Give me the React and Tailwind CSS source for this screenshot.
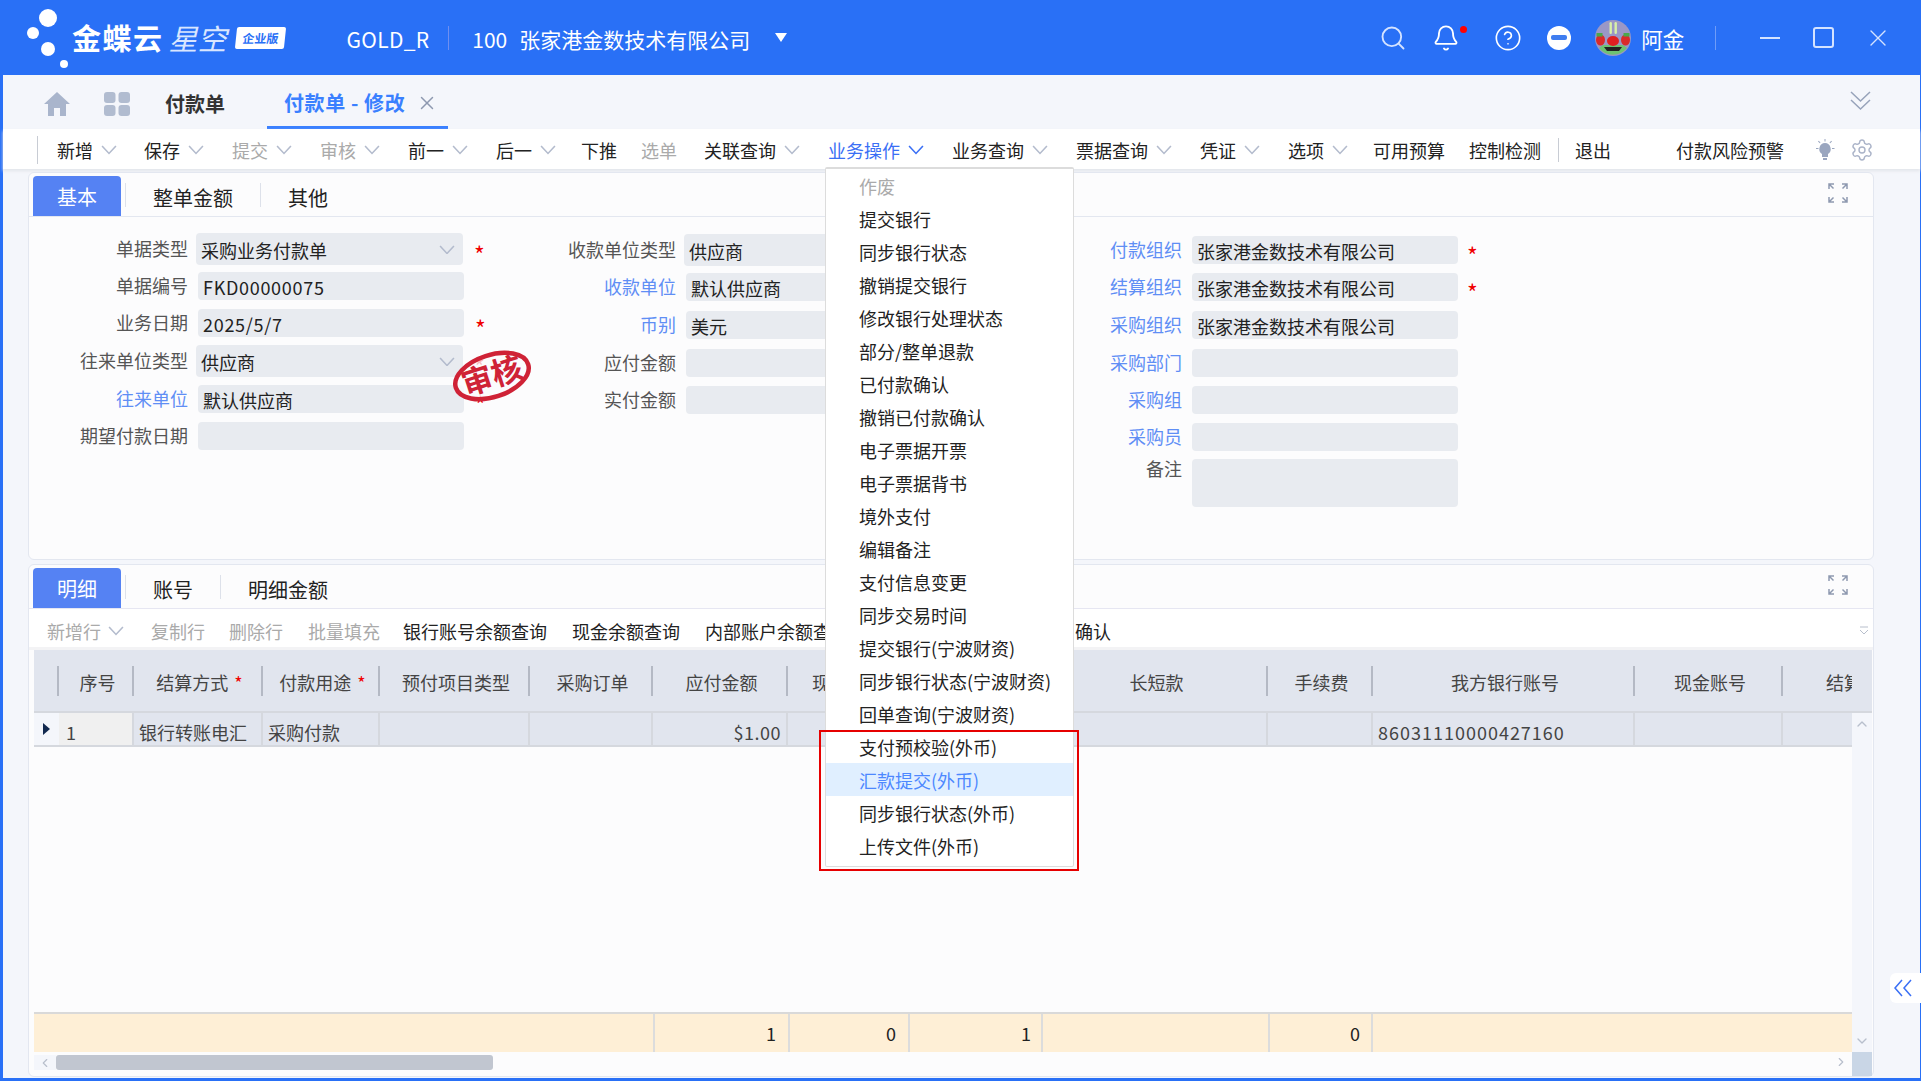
import { Search, Bell, CircleHelp, Settings, X, ChevronUp, ChevronDown, ChevronLeft, ChevronRight } from "lucide-react";

const Chevron = ({ color = "#b3bbcd", size = 16 }) => (
  <svg width={size} height={size * 0.62} viewBox="0 0 16 10" fill="none" stroke={color} strokeWidth="1.6">
    <path d="M1 1l7 7.5L15 1" />
  </svg>
);

const Expand = () => (
  <svg width="20" height="20" viewBox="0 0 20 20" fill="none" stroke="#8e99b0" strokeWidth="1.5">
    <path d="M1 6V1h5M14 1h5v5M19 14v5h-5M6 19H1v-5M1.5 1.5l4 4M18.5 1.5l-4 4M18.5 18.5l-4-4M1.5 18.5l4-4" />
  </svg>
);

const toolbar = [
  { t: "新增", c: true, mr: "mr-[27px]" },
  { t: "保存", c: true, mr: "mr-[28px]" },
  { t: "提交", c: true, off: true, mr: "mr-[28px]" },
  { t: "审核", c: true, off: true, mr: "mr-[28px]" },
  { t: "前一", c: true, mr: "mr-[28px]" },
  { t: "后一", c: true, mr: "mr-[25px]" },
  { t: "下推", mr: "mr-[24px]" },
  { t: "选单", off: true, mr: "mr-[27px]" },
  { t: "关联查询", c: true, mr: "mr-[28px]" },
  { t: "业务操作", c: true, on: true, mr: "mr-[28px]" },
  { t: "业务查询", c: true, mr: "mr-[28px]" },
  { t: "票据查询", c: true, mr: "mr-[28px]" },
  { t: "凭证", c: true, mr: "mr-[28px]" },
  { t: "选项", c: true, mr: "mr-[25px]" },
  { t: "可用预算", mr: "mr-[24px]" },
  { t: "控制检测", mr: "mr-[24px]" },
];

const menu = [
  "作废", "提交银行", "同步银行状态", "撤销提交银行", "修改银行处理状态", "部分/整单退款", "已付款确认",
  "撤销已付款确认", "电子票据开票", "电子票据背书", "境外支付", "编辑备注", "支付信息变更", "同步交易时间",
  "提交银行(宁波财资)", "同步银行状态(宁波财资)", "回单查询(宁波财资)", "支付预校验(外币)", "汇款提交(外币)",
  "同步银行状态(外币)", "上传文件(外币)",
];

const tableCols = [
  { w: "w-[25px]", t: "" },
  { w: "w-[75px]", t: "序号" },
  { w: "w-[129px]", t: "结算方式", req: true },
  { w: "w-[117px]", t: "付款用途", req: true },
  { w: "w-[150px]", t: "预付项目类型" },
  { w: "w-[123px]", t: "采购订单" },
  { w: "w-[135px]", t: "应付金额" },
  { w: "w-[122px]", t: "现" },
  { w: "w-[133px]", t: "" },
  { w: "w-[225px]", t: "长短款" },
  { w: "w-[105px]", t: "手续费" },
  { w: "w-[262px]", t: "我方银行账号" },
  { w: "w-[148px]", t: "现金账号" },
  { w: "w-[154px]", t: "结算方式" },
];

const Star = ({ far }) => (
  <span className={`${far ? "ml-[9px]" : "ml-[11px]"} -mt-[3px] h-[10px] text-[23px] leading-none text-[#f00000]`}>*</span>
);

const Field = ({ label, link, value, select, req, labelW, ctrlW, top, tall, far }) => (
  <div className={`flex ${tall ? "items-start" : "items-center"} ${top}`}>
    <div className={`${labelW} text-right ${link ? "text-[#5f8ef5]" : "text-[#555]"} ${tall ? "" : "-mt-[2px]"}`}>{label}</div>
    <div
      className={`flex items-center rounded-[4px] bg-[#e8ebf0] pl-[5px] pr-[8px] pt-[1px] text-[#222] ${
        select ? `ml-[8px] h-[32px] ${ctrlW.select}` : `ml-[10px] ${tall ? "h-[48px]" : "h-[28px]"} ${ctrlW.input}`
      }`}
    >
      <span className={`flex-1 whitespace-nowrap ${value && /^[\x00-\x7f]+$/.test(value) ? "tracking-[0.7px]" : ""}`}>{value}</span>
      {select && <Chevron />}
    </div>
    {req && <Star far={far} />}
  </div>
);

const col1Ctrl = { select: "w-[267px]", input: "w-[266px]" };
const col2Ctrl = { select: "w-[266px]", input: "w-[264px]" };

const Avatar = () => (
  <svg width="36" height="36" viewBox="0 0 36 36">
    <circle cx="18" cy="18" r="18" fill="#9a97c6" />
    <path d="M4 28a18 18 0 0 0 28 0l-4-3H8z" fill="#6ec271" />
    <path d="M9 27h18l-3 4H12z" fill="#222" />
    <rect x="14.500" y="2" width="2.400" height="12" rx="1.200" fill="#d8f0a8" />
    <rect x="19.500" y="2" width="2.400" height="12" rx="1.200" fill="#d8f0a8" />
    <ellipse cx="18" cy="21" rx="6" ry="5" fill="#e01f22" />
    <ellipse cx="5.500" cy="20" rx="4.500" ry="5.500" fill="#d92a2a" />
    <ellipse cx="30.500" cy="20" rx="4.500" ry="5.500" fill="#d92a2a" />
    <rect x="1.500" y="13" width="6" height="3.500" fill="#49a84c" />
    <rect x="28.500" y="13" width="6" height="3.500" fill="#49a84c" />
  </svg>
);

export default function App() {
  return (
    <div className="relative h-[1081px] w-[1921px] overflow-hidden bg-[#2970f6] font-['Noto_Sans_CJK_SC','Liberation_Sans',sans-serif] text-[18px] leading-none">
      <header className="flex h-[75px] items-center text-[21px] text-white">
        <svg width="50" height="75" viewBox="0 0 50 75" className="ml-[24px]" fill="#fff">
          <circle cx="24" cy="18" r="9" />
          <circle cx="9" cy="33" r="6" />
          <circle cx="24" cy="49" r="7" />
          <circle cx="40" cy="64" r="4" />
        </svg>
        <span className="-ml-[2px] text-[29px] font-bold tracking-[1.5px]">金蝶云</span>
        <span className="ml-[5px] text-[29px] italic text-[#d9e6ff]">星空</span>
        <span className="ml-[9px] flex h-[22px] w-[49px] -skew-x-6 items-center justify-center rounded-[2px] bg-white text-[12px] font-bold text-[#2970f6]">企业版</span>
        <span className="ml-[62px] pt-[3px] tracking-[0.3px]">GOLD_R</span>
        <span className="ml-[19px] h-[24px] w-px bg-[#6f8ff0]" />
        <span className="ml-[23px] pt-[3px]">100</span>
        <span className="ml-[12px] pt-[3px]">张家港金数技术有限公司</span>
        <span className="ml-[25px] h-0 w-0 border-x-[6px] border-t-[9px] border-x-transparent border-t-white" />
        <Search className="ml-[592px]" size={28} color="#d5e3ff" strokeWidth={1.6} />
        <Bell className="ml-[25px]" size={28} strokeWidth={1.6} />
        <span className="mb-[16px] h-[7px] w-[7px] rounded-full bg-[#f00]" />
        <CircleHelp className="ml-[27px]" size={28} strokeWidth={1.4} />
        <span className="ml-[25px] flex h-[24px] w-[24px] items-center justify-center rounded-full bg-white">
          <span className="h-[5px] w-[16px] rounded-[2px] bg-[#3f7df0]" />
        </span>
        <span className="ml-[24px]"><Avatar /></span>
        <span className="ml-[10px] pt-[2px] text-[21.5px]">阿金</span>
        <span className="ml-[31px] h-[24px] w-px bg-[#6f9cf8]" />
        <span className="ml-[44px] h-[2px] w-[20px] bg-[#d5e3ff]" />
        <span className="ml-[33px] h-[21px] w-[21px] rounded-[3px] border-2 border-[#d5e3ff]" />
        <X className="ml-[30px]" size={28} color="#d5e3ff" strokeWidth={1.2} />
      </header>

      <div className="ml-[3px] mr-[1px] flex h-[1003px] flex-col bg-[#f4f6fb]">
        <div className="flex h-[54px] items-center">
          <svg width="26" height="24" viewBox="0 0 26 24" className="ml-[41px] mt-[3px]" fill="#a9b5cc">
            <path d="M13 0L0 12h4v12h6v-8h6v8h6V12h4z" />
          </svg>
          <svg width="26" height="24" viewBox="0 0 26 24" className="ml-[34px] mt-[3px]" fill="#b1bcd0">
            <rect width="11.5" height="11" rx="3" />
            <rect x="14.5" width="11.5" height="11" rx="3" />
            <rect y="13" width="11.5" height="11" rx="3" />
            <rect x="14.5" y="13" width="11.5" height="11" rx="3" />
          </svg>
          <span className="ml-[35px] pt-[4px] text-[20px] font-bold text-[#333]">付款单</span>
          <div className="ml-[42px] flex h-[54px] w-[181px] items-center border-b-[3px] border-[#3a80ff] pl-[17px] pt-[5px]">
            <span className="text-[20px] font-bold tracking-[0.6px] text-[#3a80ff]">付款单 - 修改</span>
            <X className="ml-[11px]" size={22} color="#8e99b0" strokeWidth={1.6} />
          </div>
          <svg width="21" height="20" viewBox="0 0 21 20" className="ml-[1402px] -mt-[3px]" fill="none" stroke="#97a3ba" strokeWidth="1.5">
            <path d="M1 1l9.500 9L20 1M1 9l9.500 9L20 9" />
          </svg>
        </div>

        <div className="flex h-[40px] items-center bg-white pt-[2px] shadow-[0_2px_3px_#e3e5ea]">
          <span className="ml-[34px] h-[28px] w-px bg-[#c8ccd4]" />
          <div className="ml-[19px] flex items-center">
            {toolbar.map((item) => (
              <div key={item.t} className={`flex items-center ${item.mr}`}>
                <span className={item.on ? "text-[#3a6ff5]" : item.off ? "text-[#aaa]" : "text-[#222]"}>{item.t}</span>
                {item.c && (
                  <span className="ml-[8px]">
                    <Chevron color={item.on ? "#3a6ff5" : "#b3bbcd"} />
                  </span>
                )}
              </div>
            ))}
          </div>
          <span className="-ml-[7px] h-[24px] w-px bg-[#c8ccd4]" />
          <span className="ml-[16px] text-[#222]">退出</span>
          <span className="ml-[65px] text-[#222]">付款风险预警</span>
          <svg width="20" height="22" viewBox="0 0 20 22" className="ml-[31px]" fill="#9aa6bf">
            <path d="M10 4a6 6 0 0 0-3 11v3h6v-3a6 6 0 0 0-3-11zM8 19h4v2H8zM9.5 0h1v2.5h-1zM1 9h2.500v1H1zM17 9h2.500v1H17zM3 2.500l.7-.7 1.800 1.800-.7.700zM17 2.500l-.7-.7-1.800 1.800.7.700z" />
          </svg>
          <Settings className="ml-[15px]" size={24} color="#aab3c8" strokeWidth={1.4} />
        </div>

        <div className="ml-[25px] mr-[46px] mt-[3px] flex h-[388px] flex-col rounded-[6px] border border-[#e3e7f0] bg-[#fcfcfd]">
          <div className="flex h-[44px] items-end border-b border-[#e3e7f0] pl-[4px] text-[20px]">
            <span className="flex h-[40px] w-[88px] items-center justify-center rounded-t-[4px] bg-[#5582f3] pt-[2px] text-white">基本</span>
            <span className="mb-[9px] ml-[4px] h-[24px] w-px bg-[#dde1ea]" />
            <span className="mb-[8px] ml-[27px] text-[#222]">整单金额</span>
            <span className="mb-[9px] ml-[27px] h-[24px] w-px bg-[#dde1ea]" />
            <span className="mb-[8px] ml-[27px] text-[#222]">其他</span>
            <span className="mb-[4px] ml-auto mr-[25px] self-center"><Expand /></span>
          </div>
          <div className="flex">
            <div className="flex w-[460px] flex-col pt-[16px]">
              <Field labelW="w-[159px]" ctrlW={col1Ctrl} label="单据类型" value="采购业务付款单" select req />
              <Field labelW="w-[159px]" ctrlW={col1Ctrl} top="mt-[7px]" label="单据编号" value="FKD00000075" />
              <Field labelW="w-[159px]" ctrlW={col1Ctrl} top="mt-[9px]" label="业务日期" value="2025/5/7" req />
              <Field labelW="w-[159px]" ctrlW={col1Ctrl} top="mt-[8px]" label="往来单位类型" value="供应商" select req />
              <Field labelW="w-[159px]" ctrlW={col1Ctrl} top="mt-[8px]" label="往来单位" link value="默认供应商" req />
              <Field labelW="w-[159px]" ctrlW={col1Ctrl} top="mt-[9px]" label="期望付款日期" />
            </div>
            <div className="flex w-[511px] flex-col pt-[17px]">
              <Field labelW="w-[187px]" ctrlW={col2Ctrl} label="收款单位类型" value="供应商" select />
              <Field labelW="w-[187px]" ctrlW={col2Ctrl} top="mt-[7px]" label="收款单位" link value="默认供应商" />
              <Field labelW="w-[187px]" ctrlW={col2Ctrl} top="mt-[10px]" label="币别" link value="美元" />
              <Field labelW="w-[187px]" ctrlW={col2Ctrl} top="mt-[10px]" label="应付金额" />
              <Field labelW="w-[187px]" ctrlW={col2Ctrl} top="mt-[9px]" label="实付金额" />
            </div>
            <div className="flex flex-col pt-[19px]">
              <Field labelW="w-[182px]" ctrlW={col1Ctrl} label="付款组织" link value="张家港金数技术有限公司" req far />
              <Field labelW="w-[182px]" ctrlW={col1Ctrl} top="mt-[9px]" label="结算组织" link value="张家港金数技术有限公司" req far />
              <Field labelW="w-[182px]" ctrlW={col1Ctrl} top="mt-[10px]" label="采购组织" link value="张家港金数技术有限公司" />
              <Field labelW="w-[182px]" ctrlW={col1Ctrl} top="mt-[10px]" label="采购部门" link />
              <Field labelW="w-[182px]" ctrlW={col1Ctrl} top="mt-[9px]" label="采购组" link />
              <Field labelW="w-[182px]" ctrlW={col1Ctrl} top="mt-[9px]" label="采购员" link />
              <Field labelW="w-[182px]" ctrlW={col1Ctrl} top="mt-[8px]" label="备注" tall />
            </div>
          </div>
        </div>

        <div className="ml-[25px] mr-[46px] mt-[4px] flex h-[513px] flex-col rounded-[6px] border border-[#e3e7f0] bg-[#fcfcfd]">
          <div className="flex h-[44px] shrink-0 items-end border-b border-[#e6e6f2] pl-[4px] text-[20px]">
            <span className="flex h-[40px] w-[88px] items-center justify-center rounded-t-[4px] bg-[#5582f3] pt-[2px] text-white">明细</span>
            <span className="mb-[9px] ml-[4px] h-[24px] w-px bg-[#dde1ea]" />
            <span className="mb-[8px] ml-[27px] text-[#222]">账号</span>
            <span className="mb-[9px] ml-[27px] h-[24px] w-px bg-[#dde1ea]" />
            <span className="mb-[8px] ml-[27px] text-[#222]">明细金额</span>
            <span className="mb-[4px] ml-auto mr-[25px] self-center"><Expand /></span>
          </div>
          <div className="flex h-[41px] shrink-0 items-center overflow-hidden whitespace-nowrap border-b-[3px] border-[#f3f3f5] bg-white pl-[18px] pt-[6px] text-[#aaa]">
            <span>新增行</span>
            <span className="ml-[7px]"><Chevron /></span>
            <span className="ml-[27px]">复制行</span>
            <span className="ml-[24px]">删除行</span>
            <span className="ml-[25px]">批量填充</span>
            <span className="ml-[23px] text-[#222]">银行账号余额查询</span>
            <span className="ml-[25px] text-[#222]">现金余额查询</span>
            <span className="ml-[25px] text-[#222]">内部账户余额查询</span>
            <span className="ml-[226px] text-[#222]">确认</span>
            <svg width="10" height="10" viewBox="0 0 10 10" className="ml-auto mr-[4px]" fill="none" stroke="#b8bfcc" strokeWidth="1">
              <path d="M1 1h8M1 4l4 4 4-4" />
            </svg>
          </div>

          <div className="ml-[5px] mr-px flex h-[61px] shrink-0 items-center bg-[#e1e5ee] text-[#444]">
            <div className="flex w-[1818px] items-center overflow-hidden">
              {tableCols.map((c, i) => (
                <div key={i} className={`${c.w} flex h-[30px] shrink-0 items-center whitespace-nowrap pl-[4px] pt-[2px] ${i === 7 ? "justify-start" : "justify-center"} ${i < 13 ? "border-r-2 border-[#b4b9c4]" : ""}`}>
                  <span className={i === 7 ? "ml-[20px]" : ""}>{c.t}</span>
                  {c.req && <span className="ml-[6px] text-[#f00000]">*</span>}
                </div>
              ))}
            </div>
          </div>

          <div className="ml-[5px] mr-px flex flex-1 flex-col">
            <div className="h-[2px] w-full shrink-0 bg-[#d5d8de]" />
            <div className="flex flex-1">
              <div className="flex w-[1818px] flex-col">
                <div className="flex h-[34px] shrink-0 border-b-2 border-[#d5d8de] bg-[#e1e5ee] text-[#444]">
                  <div className="flex w-[25px] items-center justify-center bg-[#f4f6fb]">
                    <span className="h-0 w-0 border-y-[6px] border-l-[7px] border-y-transparent border-l-[#12294f]" />
                  </div>
                  <div className="flex w-[75px] items-center border-r-2 border-[#d5d8de] bg-[#f0f0f0] pl-[7px] pt-[5px]">1</div>
                  <div className="flex w-[129px] items-center whitespace-nowrap border-r-2 border-[#d5d8de] pl-[5px] pt-[5px]">银行转账电汇</div>
                  <div className="flex w-[117px] items-center border-r-2 border-[#d5d8de] pl-[5px] pt-[5px]">采购付款</div>
                  <div className="w-[150px] border-r-2 border-[#d5d8de]" />
                  <div className="w-[123px] border-r-2 border-[#d5d8de]" />
                  <div className="flex w-[135px] items-center justify-end border-r-2 border-[#d5d8de] pr-[5px] pt-[5px] tracking-[0.5px]">$1.00</div>
                  <div className="w-[122px] border-r-2 border-[#d5d8de]" />
                  <div className="w-[133px] border-r-2 border-[#d5d8de]" />
                  <div className="w-[225px] border-r-2 border-[#d5d8de]" />
                  <div className="w-[105px] border-r-2 border-[#d5d8de]" />
                  <div className="flex w-[262px] items-center border-r-2 border-[#d5d8de] pl-[5px] pt-[5px] tracking-[1px]">86031110000427160</div>
                  <div className="w-[148px] border-r-2 border-[#d5d8de]" />
                </div>
                <div className="flex-1" />
                <div className="flex h-[40px] shrink-0 border-t-2 border-[#d9d9d9] bg-[#feefd6] text-[#222]">
                  <div className="w-[621px] border-r-2 border-[#dcdcdc]" />
                  <div className="flex w-[135px] items-center justify-end border-r-2 border-[#dcdcdc] pr-[12px]">1</div>
                  <div className="flex w-[120px] items-center justify-end border-r-2 border-[#dcdcdc] pr-[12px]">0</div>
                  <div className="flex w-[133px] items-center justify-end border-r-2 border-[#dcdcdc] pr-[10px]">1</div>
                  <div className="w-[227px] border-r-2 border-[#dcdcdc]" />
                  <div className="flex w-[103px] items-center justify-end border-r-2 border-[#dcdcdc] pr-[11px]">0</div>
                </div>
                <div className="flex h-[24px] shrink-0 items-start pt-[3px]">
                  <span className="flex h-[15px] w-[22px] items-center justify-center bg-[#f4f6fb]">
                    <ChevronLeft size={14} color="#b8bfcc" />
                  </span>
                  <span className="h-[15px] w-[437px] rounded-[3px] bg-[#c1c6d0]" />
                  <ChevronRight className="ml-auto mr-[4px]" size={14} color="#b8bfcc" />
                </div>
              </div>
              <div className="flex w-[20px] flex-col bg-[#f4f6fb]">
                <ChevronUp className="mx-auto mt-[3px]" size={16} color="#b8bfcc" />
                <ChevronDown className="mx-auto mb-[3px] mt-auto" size={16} color="#b8bfcc" />
                <div className="h-[24px] shrink-0 bg-[#c9d6e6]" />
              </div>
            </div>
          </div>
        </div>
      </div>

      <svg width="84" height="58" viewBox="0 0 84 58" className="absolute left-[450px] top-[347px]">
        <g transform="rotate(-18 42 29)">
          <ellipse cx="42" cy="29" rx="38" ry="21" fill="#fbfbfc" fillOpacity="0.75" stroke="#cf2236" strokeWidth="4.5" />
          <text x="42" y="40" textAnchor="middle" fontSize="31" fontWeight="700" fill="#cf2236">审核</text>
        </g>
      </svg>

      <div className="absolute left-[825px] top-[167px] h-[700px] w-[249px] rounded-[2px] border border-t-2 border-[#dcdcdc] bg-white">
        {menu.map((m, i) => (
          <div
            key={m}
            className={`flex h-[33px] items-center pl-[33px] whitespace-nowrap ${
              m === "汇款提交(外币)" ? "bg-[#e0efff] text-[#4d88ff]" : i === 0 ? "text-[#aaa]" : "text-[#222]"
            }`}
          >
            {m}
          </div>
        ))}
      </div>

      <div className="absolute left-[819px] top-[730px] h-[141px] w-[260px] border-2 border-[#e60000]" />

      <div className="absolute left-[1890px] top-[973px] flex h-[30px] w-[31px] items-center rounded-l-[6px] bg-white pl-[3px]">
        <svg width="20" height="18" viewBox="0 0 20 18" fill="none" stroke="#3a6ff5" strokeWidth="1.5">
          <path d="M9 1L2 9l7 8M18 1l-7 8 7 8" />
        </svg>
      </div>
    </div>
  );
}
